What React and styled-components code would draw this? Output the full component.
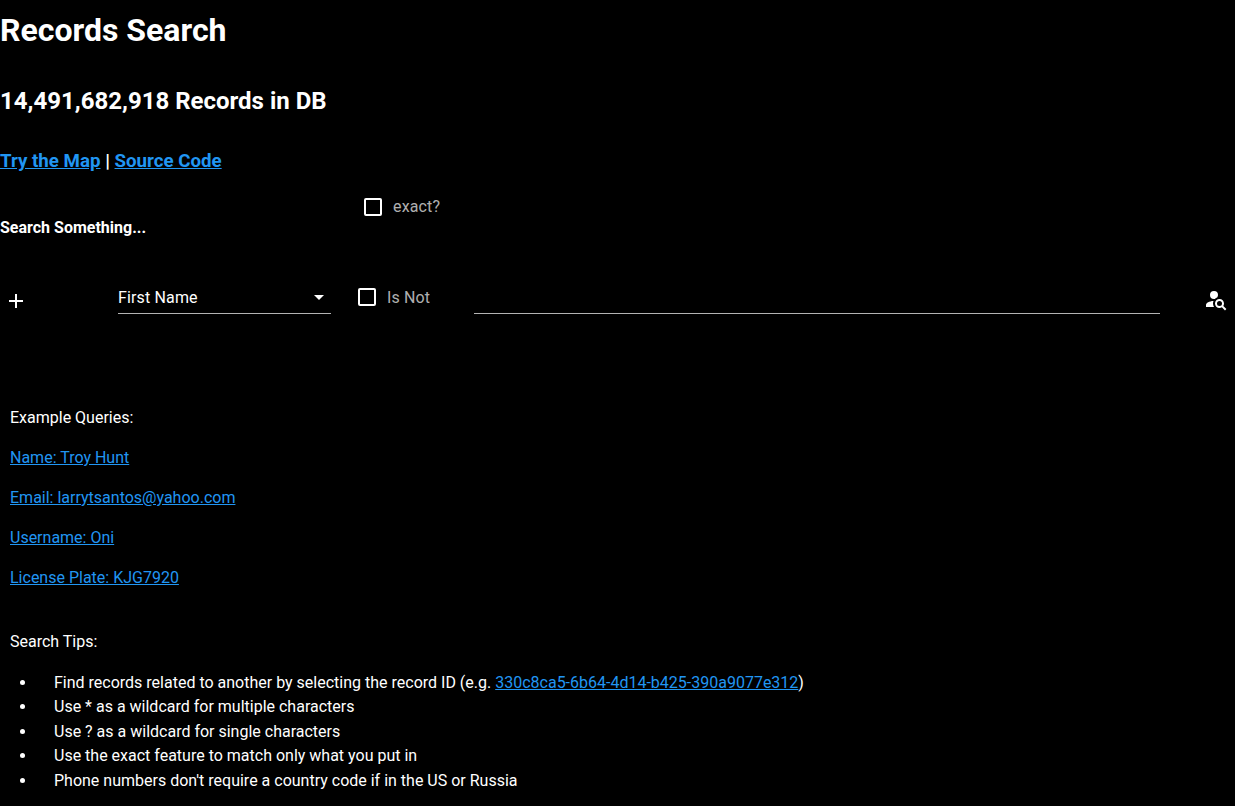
import React from "react";
import styled, { createGlobalStyle } from "styled-components";

const Global = createGlobalStyle`
  html, body { margin: 0; padding: 0; background: #000; }
  body { font-family: Roboto, sans-serif; color: #fff; font-size: 16px; line-height: 24px; overflow: hidden; }
  * { box-sizing: border-box; }
`;
const Page = styled.div`height: 806px; width: 1235px; display: flex; flex-direction: column;`;
const Title = styled.h1`font-size: 32px; line-height: 38px; font-weight: 700; margin: 11px 0 0;`;
const Count = styled.h2`font-size: 24px; line-height: 28px; font-weight: 700; margin: 38px 0 0;`;
const LinksLine = styled.h3`font-size: 18.72px; line-height: 22px; font-weight: 700; margin: 35px 0 0;`;
const A = styled.a`color: #2196f3; text-decoration: underline;`;
const SearchHead = styled.div`display: flex; height: 77px; margin-top: 23px;`;
const SearchLabel = styled.b`width: 364px; font-size: 16px; line-height: 19px; margin-top: 23px;`;
const Check = styled.span`width: 18px; height: 18px; border: 2px solid #fff; border-radius: 2px; display: block; flex: none; margin-bottom: ${(p) => (p.$lift ? "2px" : "0")};`;
const CheckRow = styled.label`display: flex; align-items: center; gap: 11px; color: rgba(255,255,255,.7); height: 24px; letter-spacing: .15px;`;
const Form = styled.div`display: flex; align-items: flex-start; height: 60px; margin-top: 9px;`;
const PlusCell = styled.div`width: 118px; padding: 12px 0 0 8px; height: 40px;`;
const PlusIcon = styled.svg`display: block; width: 16px; height: 16px;`;
const Select = styled.div`width: 213px; height: 33px; border-bottom: 1px solid rgba(255,255,255,.7); display:flex; justify-content: space-between; padding-top: 5px; letter-spacing: .15px;`;
const Caret = styled.svg`width: 24px; height: 24px; margin-top: -1px;`;
const NotCell = styled.div`width: 143px; padding: 0 0 0 27px; margin-top: 5px;`;
const Input = styled.div`width: 686px; height: 33px; border-bottom: 1px solid rgba(255,255,255,.7);`;
const SearchIcon = styled.svg`width: 24px; height: 24px; margin: 6px 0 0 44px; fill: #fff;`;
const Body = styled.div`padding: 0 0 0 10px; margin-top: 65px;`;
const Para = styled.p`margin: 0 0 16px; line-height: 24px;`;
const Tips = styled.p`margin: 40px 0 16.7px;`;
const List = styled.ul`margin: 0; padding-left: 27px; line-height: 24.5px;`;
const Item = styled.li`padding-left: 17px;`;

export default function App() {
  return (
    <Page>
      <Global />
      <Title>Records Search</Title>
      <Count>14,491,682,918 Records in DB</Count>
      <LinksLine><A href="#">Try the Map</A> | <A href="#">Source Code</A></LinksLine>
      <SearchHead>
        <SearchLabel>Search Something...</SearchLabel>
        <CheckRow><Check />exact?</CheckRow>
      </SearchHead>
      <Form>
        <PlusCell>
          <PlusIcon viewBox="0 0 16 16"><path d="M8 1v14M1 8h14" stroke="#fff" strokeWidth="2" /></PlusIcon>
        </PlusCell>
        <Select>First Name
          <Caret viewBox="0 0 24 24"><path d="M7 10l5 5 5-5z" fill="#fff" /></Caret>
        </Select>
        <NotCell><CheckRow><Check $lift />Is Not</CheckRow></NotCell>
        <Input />
        <SearchIcon viewBox="0 0 24 24"><path d="M15.5,12C18,12 20,14 20,16.5C20,17.38 19.75,18.21 19.31,18.9L22.39,22L21,23.39L17.88,20.32C17.19,20.75 16.37,21 15.5,21C13,21 11,19 11,16.5C11,14 13,12 15.5,12M15.5,14A2.5,2.5 0 0,0 13,16.5A2.5,2.5 0 0,0 15.5,19A2.5,2.5 0 0,0 18,16.5A2.5,2.5 0 0,0 15.5,14M10,4A4,4 0 0,1 14,8C14,8.91 13.69,9.75 13.18,10.43C12.32,10.75 11.55,11.26 10.91,11.9L10,12A4,4 0 0,1 6,8A4,4 0 0,1 10,4M2,20V18C2,15.88 5.31,14.14 9.5,14C9.18,14.78 9,15.62 9,16.5C9,17.79 9.38,19 10,20H2Z" /></SearchIcon>
      </Form>
      <Body>
        <Para>Example Queries:</Para>
        <Para><A href="#">Name: Troy Hunt</A></Para>
        <Para><A href="#">Email: larrytsantos@yahoo.com</A></Para>
        <Para><A href="#">Username: Oni</A></Para>
        <Para><A href="#">License Plate: KJG7920</A></Para>
        <Tips>Search Tips:</Tips>
        <List>
          <Item>Find records related to another by selecting the record ID (e.g. <A href="#">330c8ca5-6b64-4d14-b425-390a9077e312</A>)</Item>
          <Item>Use * as a wildcard for multiple characters</Item>
          <Item>Use ? as a wildcard for single characters</Item>
          <Item>Use the exact feature to match only what you put in</Item>
          <Item>Phone numbers don't require a country code if in the US or Russia</Item>
        </List>
      </Body>
    </Page>
  );
}
